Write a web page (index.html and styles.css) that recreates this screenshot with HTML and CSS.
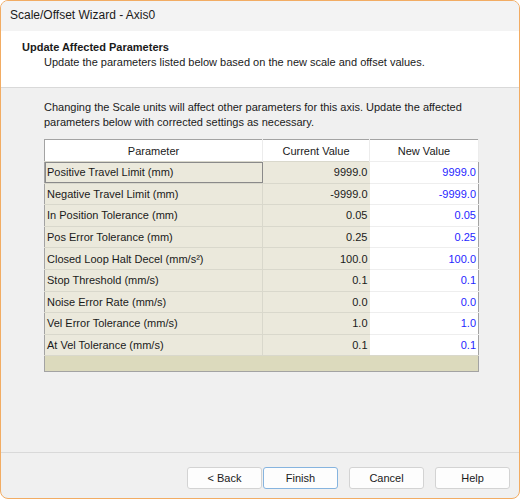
FILE: index.html
```html
<!DOCTYPE html>
<html>
<head>
    <title>Scale/Offset Wizard - Axis0</title>
    <meta charset="UTF-8">
    <link rel="stylesheet" href="styles.css">
</head>
<body>

<div class="window">
    <div class="titlebar">Scale/Offset Wizard - Axis0</div>

    <div class="page-header">
        <h1>Update Affected Parameters</h1>
        <p>Update the parameters listed below based on the new scale and offset values.</p>
    </div>

    <div class="page-body">
        <p class="intro">Changing the Scale units will affect other parameters for this axis. Update the affected<br>parameters below with corrected settings as necessary.</p>

        <table class="grid">
            <thead>
                <tr>
                    <th class="col-param">Parameter</th>
                    <th class="col-current">Current Value</th>
                    <th class="col-new">New Value</th>
                </tr>
            </thead>
            <tbody>
                <tr>
                    <td class="param selected">Positive Travel Limit (mm)</td>
                    <td class="current">9999.0</td>
                    <td class="new">9999.0</td>
                </tr>
                <tr>
                    <td class="param">Negative Travel Limit (mm)</td>
                    <td class="current">-9999.0</td>
                    <td class="new">-9999.0</td>
                </tr>
                <tr>
                    <td class="param">In Position Tolerance (mm)</td>
                    <td class="current">0.05</td>
                    <td class="new">0.05</td>
                </tr>
                <tr>
                    <td class="param">Pos Error Tolerance (mm)</td>
                    <td class="current">0.25</td>
                    <td class="new">0.25</td>
                </tr>
                <tr>
                    <td class="param">Closed Loop Halt Decel (mm/s²)</td>
                    <td class="current">100.0</td>
                    <td class="new">100.0</td>
                </tr>
                <tr>
                    <td class="param">Stop Threshold (mm/s)</td>
                    <td class="current">0.1</td>
                    <td class="new">0.1</td>
                </tr>
                <tr>
                    <td class="param">Noise Error Rate (mm/s)</td>
                    <td class="current">0.0</td>
                    <td class="new">0.0</td>
                </tr>
                <tr>
                    <td class="param">Vel Error Tolerance (mm/s)</td>
                    <td class="current">1.0</td>
                    <td class="new">1.0</td>
                </tr>
                <tr>
                    <td class="param">At Vel Tolerance (mm/s)</td>
                    <td class="current">0.1</td>
                    <td class="new">0.1</td>
                </tr>
                <tr class="filler">
                    <td colspan="3"></td>
                </tr>
            </tbody>
        </table>
    </div>

    <div class="footer">
        <button class="button back">&lt; Back</button>
        <button class="button finish">Finish</button>
        <button class="button cancel">Cancel</button>
        <button class="button help">Help</button>
    </div>
</div>

</body>
</html>
```

FILE: styles.css
```css
body {
    font-family: "Liberation Sans", Arial, sans-serif;
    font-size: 11px;
    background: white;
    margin: 0;
    padding: 0;
    color: #1a1a1a;
}

.window {
    width: 518px;
    height: 497px;
    border: 1px solid #f2ac63;
    border-radius: 8px;
    background: #f0f0f0;
    overflow: hidden;
    display: flex;
    flex-direction: column;
}

.titlebar {
    height: 30px;
    line-height: 28px;
    padding-left: 9px;
    font-size: 12px;
    background: #f3f3f3;
    color: #1a1a1a;
}

.page-header {
    background: white;
    border-bottom: 1px solid #d9d9d9;
    box-sizing: border-box;
    height: 57px;
    padding: 9px 0 0 21px;
}

.page-header h1 {
    margin: 0;
    font-size: 11px;
    font-weight: bold;
    line-height: 15px;
}

.page-header p {
    margin: 0;
    padding-left: 22px;
    line-height: 15px;
}

.page-body {
    flex: 1;
    padding: 12px 0 0 43px;
    border-bottom: 1px solid #d9d9d9;
}

.intro {
    margin: 0 0 9px;
    line-height: 15px;
}

.grid {
    border-collapse: collapse;
    width: 435px;
    table-layout: fixed;
    border: 1px solid #a3a3a3;
}

.grid th {
    height: 22px;
    padding: 0;
    font-weight: normal;
    background: white;
    border-right: 1px solid #ececec;
    box-sizing: border-box;
}

.col-param {
    width: 218px;
}

.col-current {
    width: 107px;
}

.grid td {
    height: 21.6px;
    padding: 0 2px;
    box-sizing: border-box;
    border-top: 1px solid #d9d8cc;
    background: #ebe9dc;
    white-space: nowrap;
}

.grid td.param {
    border-right: 1px solid #d9d8cc;
}

.grid td.current {
    text-align: right;
}

.grid td.new {
    text-align: right;
    background: white;
    color: #1f1fff;
    border-top-color: #eeeeee;
}

.grid td.selected {
    outline: 1px solid #8a8a8a;
    outline-offset: -1px;
}

.grid tr.filler td {
    height: 16px;
    background: #dcdabd;
}

.footer {
    height: 45px;
    display: flex;
    justify-content: flex-end;
    align-items: flex-start;
    padding: 14px 9px 0 0;
    box-sizing: border-box;
}

.button {
    width: 75px;
    height: 22px;
    margin-left: 11px;
    background: #fdfdfd;
    border: 1px solid #d3d3d3;
    border-radius: 3px;
    font-family: "Liberation Sans", Arial, sans-serif;
    font-size: 11px;
    color: #1a1a1a;
    padding: 0;
}

.button.finish {
    margin-left: 1px;
    border-color: #86b4df;
}
```
